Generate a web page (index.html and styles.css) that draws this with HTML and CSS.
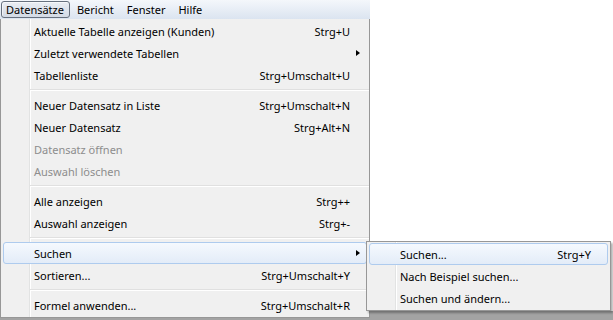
FILE: index.html
```html
<!DOCTYPE html>
<html lang="de">
<head>
  <meta charset="UTF-8">
  <title>Datensätze</title>
  <link rel="stylesheet" href="styles.css">
</head>
<body>
  <nav class="menubar">
    <span class="menubar-item open">Datensätze</span>
    <span class="menubar-item">Bericht</span>
    <span class="menubar-item">Fenster</span>
    <span class="menubar-item">Hilfe</span>
  </nav>

  <ul class="menu">
    <li class="item"><span>Aktuelle Tabelle anzeigen (Kunden)</span><span class="key">Strg+U</span></li>
    <li class="item"><span>Zuletzt verwendete Tabellen</span><span class="arrow"></span></li>
    <li class="item"><span>Tabellenliste</span><span class="key">Strg+Umschalt+U</span></li>
    <li class="sep"></li>
    <li class="item"><span>Neuer Datensatz in Liste</span><span class="key">Strg+Umschalt+N</span></li>
    <li class="item"><span>Neuer Datensatz</span><span class="key">Strg+Alt+N</span></li>
    <li class="item disabled"><span>Datensatz öffnen</span></li>
    <li class="item disabled"><span>Auswahl löschen</span></li>
    <li class="sep"></li>
    <li class="item"><span>Alle anzeigen</span><span class="key">Strg++</span></li>
    <li class="item"><span>Auswahl anzeigen</span><span class="key">Strg+-</span></li>
    <li class="sep"></li>
    <li class="item hover">
      <span>Suchen</span><span class="arrow"></span>
      <!-- Untermenü -->
      <ul class="menu submenu">
        <li class="item hover"><span>Suchen...</span><span class="key">Strg+Y</span></li>
        <li class="item"><span>Nach Beispiel suchen...</span></li>
        <li class="item"><span>Suchen und ändern...</span></li>
      </ul>
    </li>
    <li class="item"><span>Sortieren...</span><span class="key">Strg+Umschalt+Y</span></li>
    <li class="sep"></li>
    <li class="item"><span>Formel anwenden...</span><span class="key">Strg+Umschalt+R</span></li>
  </ul>
</body>
</html>
```

FILE: styles.css
```css
body {
  margin: 0;
  width: 613px;
  height: 320px;
  overflow: hidden;
  font-family: "Noto Sans", sans-serif;
  font-size: 11px;
  color: #000;
  background: linear-gradient(#fff 311px, #a3a3a3 311px);
}

.menubar {
  display: flex;
  gap: 2px;
  width: 370px;
  height: 19px;
  box-sizing: border-box;
  padding: 1px 0 0 1px;
  background: linear-gradient(#f4f7fb, #dbe4f0);
}

.menubar-item {
  height: 17px;
  line-height: 15px;
  padding: 0 5px 0 4px;
  border: 1px solid transparent;
  border-radius: 3px;
  box-sizing: border-box;
}

.menubar-item.open {
  border-color: #66707e;
  background: linear-gradient(#e9edf3, #d3dae5);
  box-shadow: inset 1px 1px 0 rgba(255, 255, 255, 0.6);
}

.menu {
  list-style: none;
  margin: 0;
  padding: 1px 2px;
  width: 370px;
  box-sizing: border-box;
  border: 1px solid #979797;
  border-top: 0;
  background: linear-gradient(to right, transparent 28px, #e2e3e3 28px, #e2e3e3 29px, #fff 29px, #fff 30px, transparent 30px) no-repeat #f0f0f0;
}

.item {
  position: relative;
  display: flex;
  justify-content: space-between;
  align-items: center;
  height: 22px;
  padding: 0 16px 0 30px;
  box-sizing: border-box;
  border: 1px solid transparent;
  border-radius: 3px;
  white-space: nowrap;
}

.item.disabled {
  color: #8d8d8d;
}

.item.hover {
  border-color: #aecbee;
  background: linear-gradient(#f5f9fe, #e3ecf8);
}

.arrow {
  position: absolute;
  right: 6px;
  top: 7px;
  width: 0;
  height: 0;
  border-left: 4px solid #000;
  border-top: 3.5px solid transparent;
  border-bottom: 3.5px solid transparent;
}

.sep {
  height: 8px;
  margin: 0 -2px 0 27px;
  background: linear-gradient(transparent 3px, #e0e0e0 3px, #e0e0e0 4px, #fff 4px, #fff 5px, transparent 5px);
}

.submenu {
  position: absolute;
  left: 100%;
  top: -2px;
  width: 245px;
  border-top: 1px solid #979797;
  box-shadow: 2px 2px 2px rgba(0, 0, 0, 0.3);
}
```
